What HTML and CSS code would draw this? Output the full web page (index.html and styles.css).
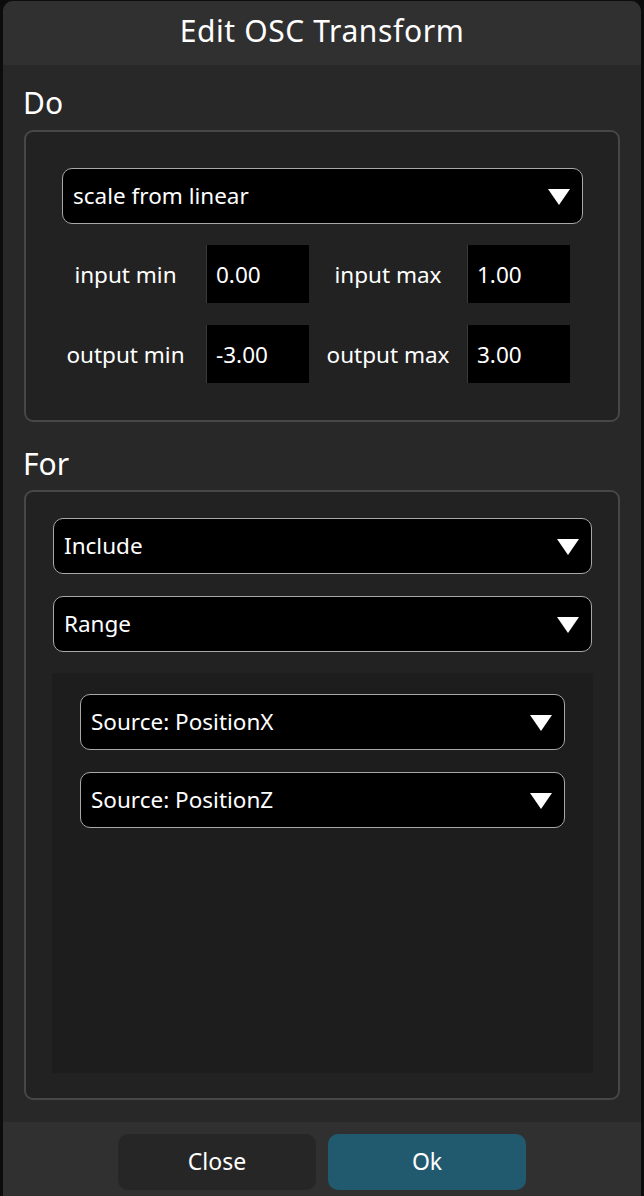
FILE: index.html
```html
<!DOCTYPE html>
<html>
<head>
<meta charset="utf-8">
<link rel="stylesheet" href="styles.css">
</head>
<body>
<div class="dialog">
  <div class="titlebar">Edit OSC Transform</div>
  <div class="content">
    <div class="section-label">Do</div>
    <div class="group do-group">
      <div class="dropdown do-dropdown"><span>scale from linear</span><svg class="caret" width="24" height="18" viewBox="0 0 24 18"><polygon points="1,1 23,1 12,17" fill="#fff"/></svg></div>
      <div class="params">
        <div class="plabel">input min</div><div class="pinput">0.00</div>
        <div class="plabel">input max</div><div class="pinput">1.00</div>
        <div class="plabel">output min</div><div class="pinput">-3.00</div>
        <div class="plabel">output max</div><div class="pinput">3.00</div>
      </div>
    </div>
    <div class="section-label for-label">For</div>
    <div class="group for-group">
      <div class="dropdown"><span>Include</span><svg class="caret" width="24" height="18" viewBox="0 0 24 18"><polygon points="1,1 23,1 12,17" fill="#fff"/></svg></div>
      <div class="dropdown"><span>Range</span><svg class="caret" width="24" height="18" viewBox="0 0 24 18"><polygon points="1,1 23,1 12,17" fill="#fff"/></svg></div>
      <div class="panel">
        <div class="dropdown"><span>Source: PositionX</span><svg class="caret" width="24" height="18" viewBox="0 0 24 18"><polygon points="1,1 23,1 12,17" fill="#fff"/></svg></div>
        <div class="dropdown"><span>Source: PositionZ</span><svg class="caret" width="24" height="18" viewBox="0 0 24 18"><polygon points="1,1 23,1 12,17" fill="#fff"/></svg></div>
      </div>
    </div>
  </div>
  <div class="footer">
    <button class="btn btn-close">Close</button>
    <button class="btn btn-ok">Ok</button>
  </div>
</div>
</body>
</html>
```
FILE: styles.css
```css
* { box-sizing: border-box; }
html, body { margin: 0; padding: 0; }
body {
  background: #0c0c0c;
  width: 644px;
  height: 1196px;
  overflow: hidden;
  font-family: "Noto Sans", "Open Sans", sans-serif;
  color: #ffffff;
}
.dialog {
  margin: 1px 3px 0 3px;
  width: 638px;
  height: 1220px;
  background: #282828;
  border-radius: 10px 10px 0 0;
  display: flex;
  flex-direction: column;
  overflow: hidden;
}
.titlebar {
  height: 64px;
  flex: none;
  background: #303030;
  display: flex;
  align-items: center;
  justify-content: center;
  font-size: 30px;
  letter-spacing: 0.6px;
  padding-bottom: 5px;
}
.content {
  padding: 0 21px 22px 21px;
}
.section-label {
  height: 65px;
  font-size: 30px;
  line-height: 32px;
  padding-top: 22px;
  padding-left: 0;
  margin-left: -1px;
}
.for-label {
  height: 68px;
  padding-top: 26px;
}
.group {
  border: 2px solid #474747;
  border-radius: 9px;
  background: #222222;
}
.do-group {
  height: 292px;
  padding: 36px 19px 0 19px;
}
.dropdown {
  height: 56px;
  background: #000;
  border: 1px solid #a8a8a8;
  border-radius: 10px;
  display: flex;
  align-items: center;
  justify-content: space-between;
  padding: 0 11px 0 10px;
  font-size: 22.5px;
}
.dropdown span { padding-bottom: 1px; }
.caret { flex: none; margin-top: 2px; }
.do-dropdown {
  margin: 0 16px 0 17px;
}
.params {
  margin-top: 21px;
  display: grid;
  grid-template-columns: 161px 103px 158px 103px;
  grid-auto-rows: 58px;
  row-gap: 22px;
}
.plabel {
  display: flex;
  align-items: center;
  justify-content: center;
  font-size: 22.5px;
}
.pinput {
  background: #000;
  border-left: 1px solid #3a3a3a;
  display: flex;
  align-items: center;
  padding-left: 9px;
  font-size: 22.5px;
}
.for-group {
  height: 610px;
  padding: 26px 26px 0 27px;
  display: flex;
  flex-direction: column;
  gap: 22px;
}
.panel {
  margin: -1px -1px 0 -1px;
  height: 400px;
  background: #1d1d1d;
  padding: 21px 28px 0 28px;
  display: flex;
  flex-direction: column;
  gap: 22px;
}
.footer {
  flex: 1;
  background: #303030;
  display: flex;
  justify-content: center;
  gap: 12px;
  padding-top: 12px;
}
.btn {
  width: 198px;
  height: 56px;
  border: none;
  border-radius: 10px;
  color: #fff;
  font-family: "Noto Sans", "Open Sans", sans-serif;
  font-size: 23px;
  padding: 0 0 2px 0;
}
.btn-close { background: #262626; }
.btn-ok { background: #215a6e; }
```
